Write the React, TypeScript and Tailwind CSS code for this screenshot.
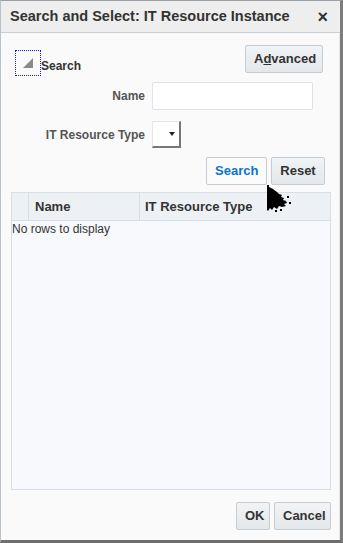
import React from "react";

const font = { fontFamily: '"Liberation Sans", Arial, sans-serif' };

const Button: React.FC<React.PropsWithChildren<{ className?: string; color?: string }>> = ({
  children,
  className,
  color,
}) => (
  <button
    className={`h-[28px] rounded-[2px] border border-[#c4ccd4] px-[8px] text-[13px] font-bold ${color ?? "text-[#333] bg-gradient-to-b from-[#f1f3f5] to-[#e4e8eb]"} ${className ?? ""}`}
  >
    {children}
  </button>
);

const Cursor = () => (
  <svg className="absolute left-[265px] top-[183px]" width="27" height="29" viewBox="0 0 27 29">
    <path d="M1 1 L3 1 L3 3 L7 5 L11 8 L13 10 L16 11 L15 13 L18 14 L17 16 L20 17 L21 19 L18 20 L20 22 L16 23 L13 22 L11 25 L8 23 L6 26 L4 24 L2 27 L1 26 Z" fill="#000" />
    <rect x="21" y="12" width="2" height="2" fill="#000" />
    <rect x="23" y="18" width="2" height="2" fill="#000" />
    <rect x="14" y="25" width="2" height="2" fill="#000" />
    <rect x="9" y="26" width="2" height="2" fill="#000" />
  </svg>
);

export default function App() {
  return (
    <div
      style={font}
      className="relative flex h-[543px] w-[343px] flex-col border-l border-t border-l-[#b8c2cc] border-t-[#9aa0a6] border-r-[3px] border-b-[3px] border-r-[#7c7c7c] border-b-[#6e6e6e] bg-[#fafafa]"
    >
      <div className="flex h-[32px] shrink-0 items-center justify-between border-b border-[#c7cfd7] bg-[#eeeeee] pl-[9px] pr-[12px]">
        <span className="text-[14.5px] font-bold text-[#333]">Search and Select: IT Resource Instance</span>
        <span className="text-[18px] font-bold leading-none text-[#333]">×</span>
      </div>

      <div className="flex flex-1 flex-col border-r border-[#e4e8ec]">
        <div className="flex h-[43px] items-end justify-between pl-[14px] pr-[16px]">
          <div className="flex items-end">
            <div className="flex h-[26px] w-[26px] items-center justify-center border border-dotted border-[#1a1aff]">
              <svg width="12" height="12" viewBox="0 0 12 12">
                <path d="M11 1 L11 11 L1 11 Z" fill="#8a8a8a" />
              </svg>
            </div>
            <span className="mb-[1px] text-[12px] font-bold text-[#333]">Search</span>
          </div>
          <Button className="mb-[3px] w-[78px]">
            A<span className="underline">d</span>vanced
          </Button>
        </div>

        <div className="mt-[6px] flex items-center">
          <span className="w-[144px] text-right text-[12px] font-bold text-[#555]">Name</span>
          <div className="ml-[7px] h-[28px] w-[161px] rounded-[2px] border border-[#dfe3e8] bg-white" />
        </div>

        <div className="mt-[11px] flex items-center">
          <span className="w-[144px] text-right text-[12px] font-bold text-[#555]">IT Resource Type</span>
          <div className="ml-[7px] flex h-[27px] w-[29px] items-center justify-end border-b-2 border-r-2 border-l border-t border-b-[#777] border-r-[#777] border-l-[#e6e6e6] border-t-[#e6e6e6] bg-white pr-[4px]">
            <svg width="6" height="4" viewBox="0 0 6 4">
              <path d="M0 0 L6 0 L3 4 Z" fill="#222" />
            </svg>
          </div>
        </div>

        <div className="mt-[9px] flex justify-end gap-[4px] pr-[14px]">
          <Button className="w-[61px]" color="text-[#0a73d0] bg-[#fbfbfb]">
            Search
          </Button>
          <Button className="w-[54px]">Reset</Button>
        </div>

        <div className="ml-[10px] mt-[7px] flex h-[298px] w-[320px] flex-col border border-[#d6dfe7] bg-[#f8f9fc]">
          <div className="flex h-[28px] shrink-0 border-b border-[#d6dfe7] bg-[#eef1f4] text-[13px] font-bold text-[#333]">
            <div className="w-[17px] border-r border-[#d6dfe7]" />
            <div className="flex w-[111px] items-center border-r border-[#d6dfe7] pl-[6px]">Name</div>
            <div className="flex flex-1 items-center pl-[5px]">IT Resource Type</div>
          </div>
          <div className="text-[12px] leading-[16px] text-[#333]">No rows to display</div>
        </div>

        <div className="mt-[12px] flex justify-end gap-[4px] pr-[8px]">
          <Button className="w-[34px] px-0">OK</Button>
          <Button className="w-[57px] px-0">Cancel</Button>
        </div>
      </div>

      <Cursor />
    </div>
  );
}
